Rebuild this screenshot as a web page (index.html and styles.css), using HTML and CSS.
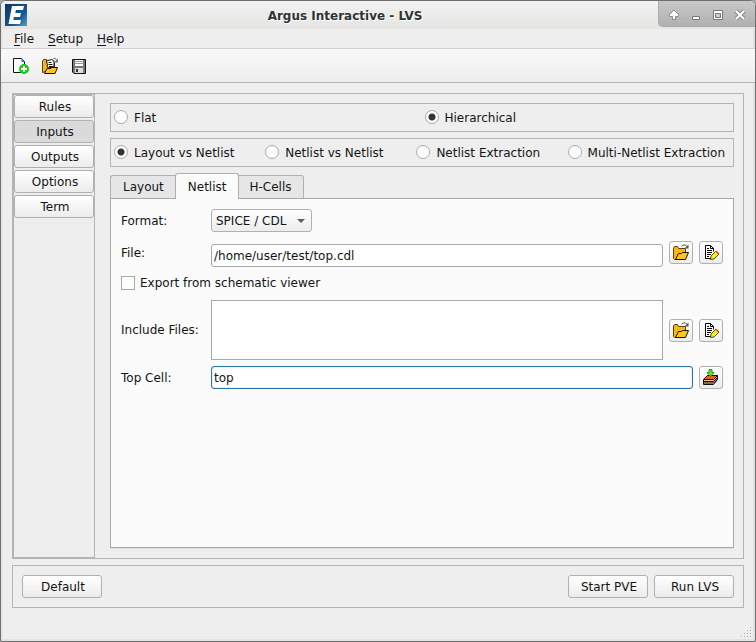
FILE: index.html
```html
<!DOCTYPE html>
<html lang="en">
<head>
    <meta charset="UTF-8">
    <title>Argus Interactive - LVS</title>
    <link rel="stylesheet" href="styles.css">
</head>
<body>
    <!-- Shared icons -->
    <svg class="icon-defs" width="0" height="0" aria-hidden="true">
        <symbol id="icon-folder" viewBox="0 0 16 17">
            <path d="M.5 14.500V4l1-1.500h3L5.500 4.500h7v5l-9 6h-2z" fill="#f7b612" stroke="#5c4300"/>
            <path d="M2.500 15.500l3-6h3l1-1h6l-3 7z" fill="#ffc423" stroke="#1a1200"/>
            <path d="M8.500 2.500l1.500-1.500h2.500l1.500 1.500" fill="none" stroke="#555"/>
            <path d="M15.500 .5v4h-4z" fill="#555"/>
        </symbol>
        <symbol id="icon-edit" viewBox="0 0 16 17">
            <path d="M2.500 1.500h5l3 3v10h-8z" fill="#fff"/>
            <path d="M8 14.500H2.500v-13h5l3 3v3M7.500 1.500v3h3" fill="none" stroke="#000"/>
            <path d="M4 4.500h2M4 6.500h5M4 8.500h5M4 10.500h4M4 12.500h2" stroke="#000"/>
            <path d="M7.500 15.500l.5-3.500 5-5 3 3-5 5z" fill="#fff000" stroke="#222" stroke-width=".8"/>
            <path d="M12.500 7.800l1-1 2.500 2.500-1 1z" fill="#ee3a3a"/>
        </symbol>
        <symbol id="icon-load" viewBox="0 0 16 17">
            <path d="M.5 15.500v-5l4-4h10v4l-4 5z" fill="#f9c0a0" stroke="#111"/>
            <path d="M.5 10.500l4-4h10l-4 4z" fill="#ff5b14" stroke="#111"/>
            <path d="M1 12.500h9.500l4-4M1 14h9.500l4-4" fill="none" stroke="#111"/>
            <path d="M6 .5h3v3h2L7.500 7.500 4 3.500h2z" fill="#55ed23" stroke="#168000" stroke-width=".8"/>
        </symbol>
    </svg>

    <div class="window">
        <header class="titlebar">
            <svg class="logo" viewBox="0 0 22 22" aria-hidden="true">
                <defs>
                    <linearGradient id="logo-bg" x1="0" y1="0" x2="1" y2="1">
                        <stop offset="0" stop-color="#0a3568"/>
                        <stop offset=".65" stop-color="#175a96"/>
                        <stop offset="1" stop-color="#49a3d4"/>
                    </linearGradient>
                </defs>
                <rect width="22" height="22" fill="url(#logo-bg)"/>
                <path d="M7 2h12l-1 4h-7l-.7 3H16l-1 4H9l-.7 3H16l-1 4H3.500z" fill="#fff"/>
            </svg>
            <h1>Argus Interactive - LVS</h1>
            <div class="window-buttons">
                <button type="button" aria-label="Shade">
                    <svg viewBox="0 0 12 12"><path d="M6 1L1 6l1 1.500h2.500v3h3v-3H10L11 6z" fill="#fff" stroke="#888"/></svg>
                </button>
                <button type="button" aria-label="Minimize">
                    <svg viewBox="0 0 12 12"><path d="M2.500 7.500h7v3h-7z" fill="#fff" stroke="#777"/></svg>
                </button>
                <button type="button" aria-label="Maximize">
                    <svg viewBox="0 0 12 12"><path d="M1.500 1.500h9v9h-9z" fill="#fff" stroke="#777"/><path d="M3.500 4.500h5v4h-5z" fill="#ccc" stroke="#777"/></svg>
                </button>
                <button type="button" aria-label="Close">
                    <svg viewBox="0 0 12 12"><path d="M2 2l8 8M10 2l-8 8" stroke="#888" stroke-width="4"/><path d="M2 2l8 8M10 2l-8 8" stroke="#fff" stroke-width="2"/></svg>
                </button>
            </div>
        </header>

        <nav class="menubar">
            <a href="#file"><u>F</u>ile</a>
            <a href="#setup"><u>S</u>etup</a>
            <a href="#help"><u>H</u>elp</a>
        </nav>

        <div class="toolbar">
            <button type="button" aria-label="New">
                <svg viewBox="0 0 17 17">
                    <path d="M.5 .5h8l3 3v11H.5z" fill="#fdfdfd" stroke="#111"/>
                    <path d="M9 1v2.500h2.500" fill="#4f8fd0" stroke="#3570a8"/>
                    <circle cx="11" cy="11" r="5" fill="#19c81b"/>
                    <path d="M11 8v6M8 11h6" stroke="#fff" stroke-width="2"/>
                </svg>
            </button>
            <button type="button" aria-label="Open">
                <svg viewBox="0 0 17 17">
                    <path d="M.5 14.500V3l1-1.500h3V4.500h8v6z" fill="#f7b612" stroke="#5c4300"/>
                    <path d="M4.500 3l5-1.500 2.500 1.500v6l-6 1z" fill="#fff" stroke="#111"/>
                    <path d="M6.500 4.500h3M6.500 6.500h4M7 8.500h4" stroke="#111"/>
                    <path d="M2.500 15.500l2.500-5h4l1-1h5.500l-2.500 6z" fill="#ffc423" stroke="#1a1200"/>
                    <path d="M10.500 1.500l1-1h2l1 1.500" fill="none" stroke="#777"/>
                    <path d="M16 .5v4h-4z" fill="#777"/>
                </svg>
            </button>
            <button type="button" aria-label="Save">
                <svg viewBox="0 0 17 17">
                    <path d="M1.500 1.500h13v14H3l-1.500-1.500z" fill="#777" stroke="#111"/>
                    <path d="M4 2h8v6H4z" fill="#fff"/>
                    <path d="M4 3.500h8M4 5.500h8" stroke="#999"/>
                    <path d="M4 10h8v5H4z" fill="#ddd"/>
                    <path d="M5 11h2v3H5z" fill="#333"/>
                </svg>
            </button>
        </div>

        <main class="content">
            <div class="workspace">
                <nav class="sidebar">
                    <button type="button">Rules</button>
                    <button type="button" class="active">Inputs</button>
                    <button type="button">Outputs</button>
                    <button type="button">Options</button>
                    <button type="button">Term</button>
                </nav>

                <div class="panel">
                    <div class="radio-group two" role="radiogroup" aria-label="Run style">
                        <label><input type="radio" name="style">Flat</label>
                        <label><input type="radio" name="style" checked>Hierarchical</label>
                    </div>

                    <div class="radio-group four" role="radiogroup" aria-label="Comparison">
                        <label><input type="radio" name="compare" checked>Layout vs Netlist</label>
                        <label><input type="radio" name="compare">Netlist vs Netlist</label>
                        <label><input type="radio" name="compare">Netlist Extraction</label>
                        <label><input type="radio" name="compare">Multi-Netlist Extraction</label>
                    </div>

                    <div class="tabs" role="tablist">
                        <button type="button" role="tab">Layout</button>
                        <button type="button" role="tab" class="active" aria-selected="true">Netlist</button>
                        <button type="button" role="tab">H-Cells</button>
                    </div>

                    <form class="pane">
                        <label for="format">Format:</label>
                        <div class="select wide">
                            <select id="format">
                                <option>SPICE / CDL</option>
                            </select>
                        </div>

                        <label for="file">File:</label>
                        <input class="low" type="text" id="file" value="/home/user/test/top.cdl">
                        <button type="button" class="icon-button" aria-label="Browse file"><svg><use href="#icon-folder"/></svg></button>
                        <button type="button" class="icon-button" aria-label="Edit file"><svg><use href="#icon-edit"/></svg></button>

                        <label class="check"><input type="checkbox">Export from schematic viewer</label>

                        <label for="include" class="middle">Include Files:</label>
                        <textarea id="include"></textarea>
                        <button type="button" class="icon-button middle" aria-label="Browse include files"><svg><use href="#icon-folder"/></svg></button>
                        <button type="button" class="icon-button middle" aria-label="Edit include files"><svg><use href="#icon-edit"/></svg></button>

                        <label for="topcell">Top Cell:</label>
                        <input class="focused" type="text" id="topcell" value="top">
                        <button type="button" class="icon-button" aria-label="Load top cell"><svg><use href="#icon-load"/></svg></button>
                    </form>
                </div>
            </div>

            <footer class="actions">
                <button type="button">Default</button>
                <button type="button" class="push">Start PVE</button>
                <button type="button">Run LVS</button>
            </footer>
        </main>

        <svg class="grip" viewBox="0 0 12 12" aria-hidden="true">
            <path d="M10 1.500h1M7 4.500h1M10 4.500h1M4 7.500h1M7 7.500h1M10 7.500h1M1 10.500h1M4 10.500h1M7 10.500h1M10 10.500h1" stroke="#aaa"/>
        </svg>
    </div>
</body>
</html>
```

FILE: styles.css
```css
* {
    box-sizing: border-box;
}

body {
    margin: 0;
    background-color: #aaaaaa;
    color: #141414;
    font-family: "DejaVu Sans", sans-serif;
    font-size: 12px;
    line-height: 16px;
}

button, input, select, textarea {
    margin: 0;
    color: inherit;
    font: inherit;
}

button {
    padding: 0;
}

.icon-defs {
    position: absolute;
}

.window {
    position: relative;
    display: flex;
    flex-direction: column;
    min-height: 100vh;
    border: 1px solid #6e6e6e;
    border-radius: 6px 6px 2px 2px;
    background-color: #eeeeee;
    box-shadow: inset -2px -2px 0 #e2e2e2, inset 2px 0 0 #e6e6e6;
    overflow: hidden;
}

/* Title bar */
.titlebar {
    display: grid;
    grid-template-columns: 1fr auto 1fr;
    height: 28px;
    background: linear-gradient(#f2f2f2, #e4e4e3);
}

.titlebar h1 {
    margin: 0;
    padding: 6px 66px 0 0;
    color: #2e3436;
    font-size: 12px;
    line-height: 18px;
    text-shadow: 1px 1px 0 #ffffff;
}

.logo {
    width: 22px;
    height: 22px;
    margin: 3px 4px;
}

.window-buttons {
    display: flex;
    justify-self: end;
    gap: 10px;
    height: 26px;
    padding: 0 9px;
    border: 1px solid #aaaaaa;
    border-width: 0 0 1px 1px;
    border-bottom-left-radius: 5px;
    background: linear-gradient(#c8c8c8, #b0b0b0);
}

.window-buttons button {
    width: 12px;
    border: 0;
    background: none;
}

.window-buttons svg {
    display: block;
    width: 12px;
    height: 12px;
    margin-top: 2px;
}

/* Menu and toolbar */
.menubar {
    display: flex;
    gap: 14px;
    height: 20px;
    padding: 2px 13px 0;
    border-bottom: 1px solid #d0d0d0;
}

.menubar a {
    color: inherit;
    text-decoration: none;
}

.menubar u {
    text-underline-offset: 2px;
}

.toolbar {
    display: flex;
    gap: 12px;
    height: 34px;
    padding: 9px 12px;
    border-bottom: 1px solid #b4b4b4;
    background: linear-gradient(#f8f8f8, #eeeeee);
}

.toolbar button {
    border: 0;
    background: none;
}

.toolbar svg {
    display: block;
    width: 17px;
    height: 17px;
}

/* Main area */
.content {
    display: flex;
    flex: 1;
    flex-direction: column;
    gap: 6px;
    padding: 10px 11px 33px;
}

.workspace {
    display: flex;
    flex: 1;
    gap: 15px;
    border: 1px solid #b4b4b4;
}

.sidebar {
    display: flex;
    flex-direction: column;
    gap: 2px;
    width: 82px;
    border: 1px solid #b4b4b4;
}

.sidebar button,
.actions button,
.icon-button,
.select select {
    border: 1px solid #b0b0b0;
    border-radius: 3px;
    background: linear-gradient(#ffffff, #ececec);
}

.sidebar button,
.actions button {
    height: 23px;
    padding-left: 2px;
}

.sidebar .active {
    background: #dadada;
}

.panel {
    display: flex;
    flex: 1;
    flex-direction: column;
    padding: 9px 9px 10px 0;
}

.radio-group {
    display: grid;
    align-items: center;
    height: 29px;
    margin-bottom: 6px;
    padding: 0 8px 0 3px;
    border: 1px solid #b4b4b4;
}

.two {
    grid-template-columns: 1fr 1fr;
    column-gap: 10px;
}

.four {
    grid-template-columns: 1fr 1fr 1fr auto;
}

.radio-group label,
.check {
    display: flex;
    align-items: center;
    gap: 6px;
    white-space: nowrap;
}

input[type="radio"],
input[type="checkbox"] {
    appearance: none;
    width: 14px;
    height: 14px;
    margin-bottom: 2px;
    border: 1px solid #a8a8a8;
    background-color: #ffffff;
}

input[type="radio"] {
    border-radius: 50%;
}

input[type="radio"]:checked {
    background-image: radial-gradient(circle, #333333 3px, transparent 4px);
}

/* Tabs */
.tabs {
    display: flex;
    align-items: flex-end;
    height: 26px;
    padding-top: 1px;
}

.tabs button {
    height: 24px;
    padding: 0 11px;
    border: 1px solid #b0b0b0;
    border-left-width: 0;
    border-radius: 0 3px 0 0;
    background-color: #e6e6e6;
}

.tabs button:first-child {
    padding-left: 12px;
    border-width: 1px 0 1px 1px;
    border-radius: 3px 0 0 0;
}

.tabs .active {
    position: relative;
    height: 26px;
    padding-left: 12px;
    border-width: 1px 1px 0;
    border-radius: 3px 3px 0 0;
    background-color: #fbfbfb;
}

.pane {
    display: grid;
    flex: 1;
    grid-template-columns: 84px 1fr 24px 24px;
    grid-template-rows: 26px 26px 21px 60px 24px;
    gap: 6px;
    align-items: start;
    margin-top: -1px;
    padding: 10px;
    border: 1px solid #a8a8a8;
    background-color: #fbfbfb;
    box-shadow: 0 1px 0 #dddddd;
}

.pane label {
    line-height: 24px;
    white-space: nowrap;
}

.pane .middle {
    align-self: center;
}

.pane .low {
    align-self: end;
}

.pane .wide {
    grid-column: span 3;
}

.pane .check {
    grid-column: 1 / -1;
    gap: 5px;
    line-height: 21px;
}

.pane input[type="text"],
.pane textarea {
    width: 100%;
    height: 23px;
    padding: 0 2px;
    border: 1px solid #a8a8a8;
    border-radius: 3px;
    background-color: #ffffff;
}

.pane textarea {
    height: 60px;
    border-radius: 0;
    resize: none;
}

.pane input[type="text"].focused {
    grid-column: span 2;
    border-color: #2a76a5;
    box-shadow: inset 0 0 1px #2a76a5;
}

.select {
    position: relative;
    width: 101px;
}

.select select {
    appearance: none;
    width: 100%;
    height: 23px;
    padding: 0 4px;
}

.select::after {
    content: "";
    position: absolute;
    top: 10px;
    right: 7px;
    border: 4px solid transparent;
    border-top-color: #606060;
    border-bottom: 0;
    pointer-events: none;
}

.icon-button {
    display: grid;
    place-items: center;
    width: 24px;
    height: 23px;
}

.icon-button svg {
    width: 16px;
    height: 17px;
}

/* Footer */
.actions {
    display: flex;
    gap: 6px;
    padding: 9px;
    border: 1px solid #b4b4b4;
}

.actions button {
    width: 80px;
}

.actions .push {
    margin-left: auto;
}

.grip {
    position: absolute;
    right: 3px;
    bottom: 3px;
    width: 12px;
    height: 12px;
}
```
